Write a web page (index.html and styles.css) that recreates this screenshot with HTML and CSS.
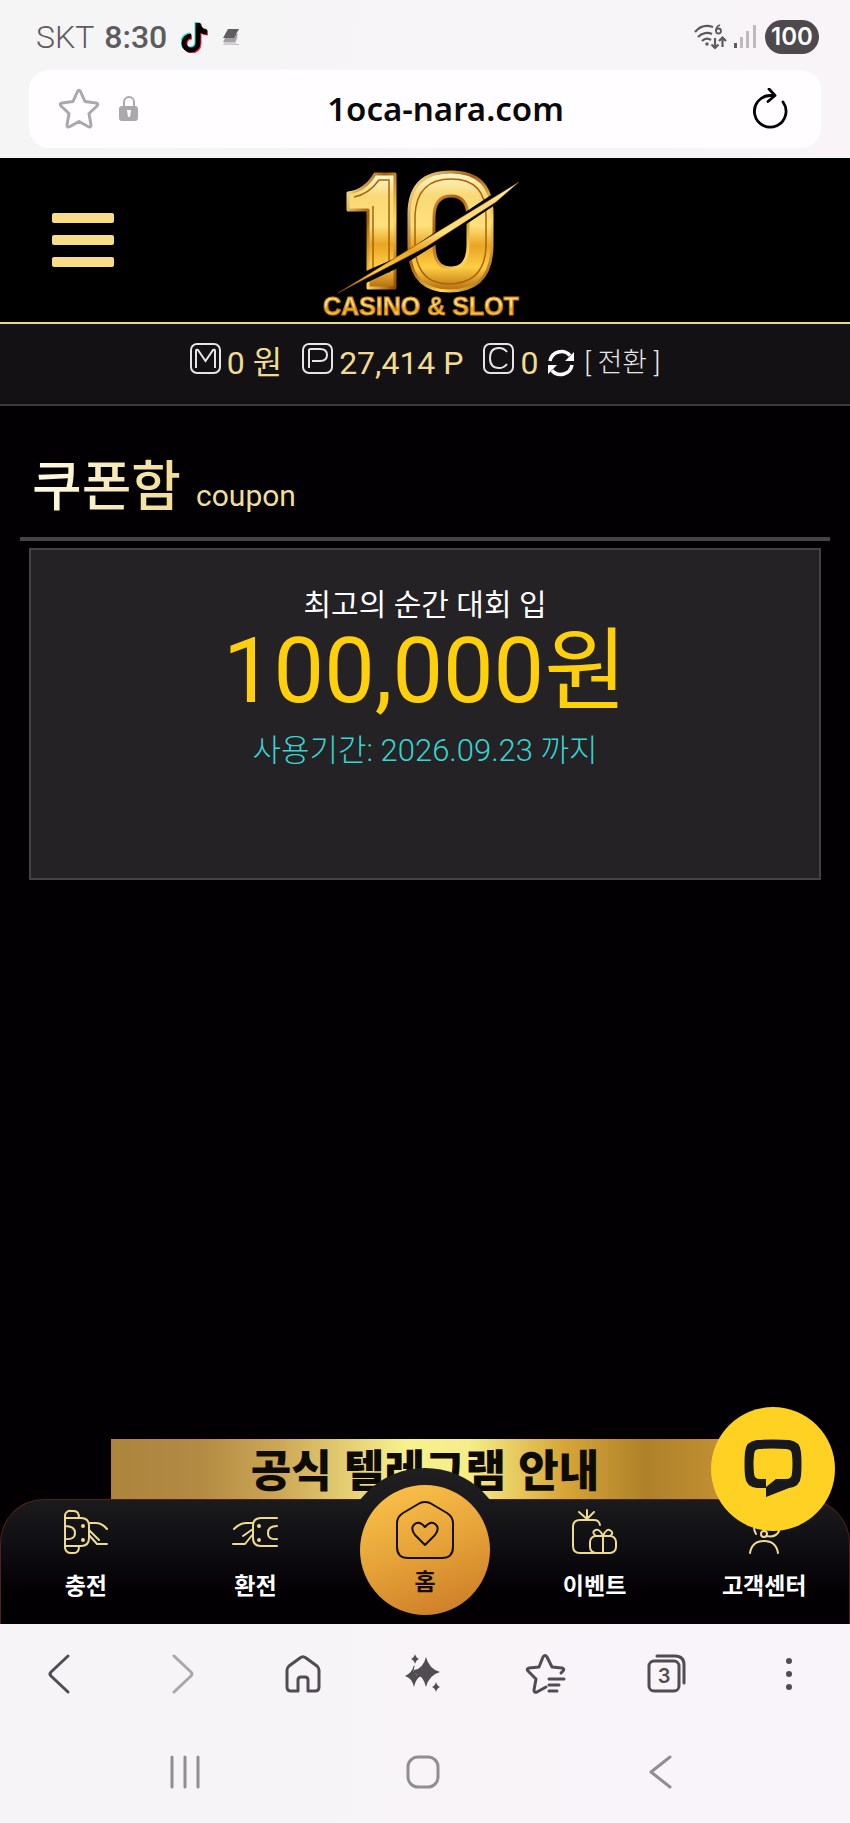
FILE: index.html
```html
<!DOCTYPE html>
<html lang="ko">
<head>
<meta charset="utf-8">
<meta name="viewport" content="width=device-width, initial-scale=1">
<title>쿠폰함</title>
<link rel="stylesheet" href="styles.css">
</head>
<body>
<div class="browser-top">
  <div class="status">
    <span class="carrier">SKT</span>
    <span class="clock">8:30</span>
    <svg class="tiktok" width="28" height="32" viewBox="0 0 28 32" aria-hidden="true">
      <g fill="none" stroke-width="5">
        <path stroke="#25e5df" d="M16 1v20a7 7 0 1 1-7-7M16 2c1 5 4 8 9 8"/>
        <path stroke="#fe2c55" d="M18 3v20a7 7 0 1 1-7-7M18 4c1 5 4 8 9 8"/>
        <path stroke="#000" d="M17 2v20a7 7 0 1 1-7-7M17 3c1 5 4 8 9 8"/>
      </g>
    </svg>
    <svg class="stack" width="18" height="18" viewBox="0 0 18 18" aria-hidden="true">
      <path fill="#cfcdcf" d="M4 9h11l-3 8H0z"/><path fill="#a3a1a3" d="M4 6h11l-3 8H0z"/><path fill="#5f5d5f" d="M5 1h11l-5 9H0z"/>
      <path stroke="#bbb" d="M12 16.500h4"/>
    </svg>
    <span class="status-right">
      <svg width="34" height="28" viewBox="0 0 34 28" aria-hidden="true">
        <g fill="none" stroke="#5d5b5d" stroke-width="2.200">
          <path d="M2 9C7 3 14 2 20 4M5 14c4-4.500 10-5 14-3M9 18c3-3 6-3 9-1"/>
          <path d="M22 15v10m-3.500-3.500L22 25l3.500-3.500M29.500 24V14.500m-3.500 3.500l3.500-3.500 3.500 3.500"/>
          <path stroke-width="1.800" d="M27 2c-3 1-4 3-4 6"/><circle cx="25.500" cy="8" r="2.500" stroke-width="1.800"/>
        </g>
        <circle cx="14" cy="21" r="1.700" fill="#5d5b5d"/>
      </svg>
      <svg width="24" height="26" viewBox="0 0 24 26" aria-hidden="true">
        <path fill="#5d5b5d" d="M1 19h3v5H1z"/><path fill="#bdbbbd" d="M7 13h3v11H7zM13 7h3v17h-3zM20 1h3v23h-3z"/>
      </svg>
      <span class="battery">100</span>
    </span>
  </div>
  <div class="address">
    <button class="icon-btn" aria-label="북마크"><svg width="42" height="42" viewBox="0 0 42 42" fill="none" stroke="#aaa8aa" stroke-width="3" stroke-linejoin="round" aria-hidden="true"><path d="M19.500 3.500q1.500-2.500 3 0l4.500 10 11 1.500q3 .7 1 3l-8 7.500 2 11.500q0 3-3 1.500L21 33.500l-9 5q-3 1.500-3-1.500l2-11.500L3 18q-2-2.300 1-3l11-1.500z"/></svg></button>
    <svg class="lock" width="22" height="28" viewBox="0 0 22 28" aria-hidden="true"><path d="M6 12V7a5 5 0 0 1 10 0v5" fill="none" stroke="#aaa8aa" stroke-width="2"/><rect x="1" y="11" width="19" height="15" rx="3" fill="#aaa8aa"/><path fill="#fff" d="M9 15h4l-1 7h-2z"/></svg>
    <span class="url">1oca-nara.com</span>
    <button class="icon-btn reload" aria-label="새로고침"><svg width="38" height="42" viewBox="0 0 38 42" fill="none" stroke="#000" stroke-width="2.800" stroke-linecap="round" stroke-linejoin="round" aria-hidden="true"><path d="M32 14A15.800 15.800 0 1 1 19 7.500h4M18 1l6 6.500-7 6"/></svg></button>
  </div>
</div>

<header class="site-header">
  <button class="menu-btn" aria-label="메뉴"><span></span><span></span><span></span></button>
  <a class="logo" href="#" aria-label="10 CASINO &amp; SLOT">
    <svg width="206" height="152" viewBox="0 0 206 152" aria-hidden="true">
      <defs>
        <linearGradient id="gold" x1="0" y1="0" x2="0" y2="1">
          <stop offset="0" stop-color="#fff9d0"/><stop offset=".2" stop-color="#f9d876"/><stop offset=".45" stop-color="#ffe27c"/><stop offset=".62" stop-color="#e9a422"/><stop offset=".8" stop-color="#ffce45"/><stop offset="1" stop-color="#b36a0c"/>
        </linearGradient>
        <linearGradient id="edge" x1="0" y1="0" x2="1" y2="1">
          <stop offset="0" stop-color="#fff0a0"/><stop offset=".4" stop-color="#a85c08"/><stop offset=".7" stop-color="#ffd65e"/><stop offset="1" stop-color="#8b4705"/>
        </linearGradient>
      </defs>
      <g fill="url(#gold)" stroke="url(#edge)" stroke-width="3" stroke-linejoin="round">
        <path d="M26 26q17-2 27-19h20v114H46V43H26z"/>
        <path fill-rule="evenodd" d="M129 5q41 0 41 42v31q0 46-43 46-40 0-40-46V47q0-42 42-42zm0 24q-17 0-17 22v27q0 23 17 23t17-23V51q0-22-17-22z"/>
      </g>
      <path fill="none" stroke="#a8630c" stroke-width="1.500" d="M32 30q15-3 25-17h10v93M51 103V39M93 78V48Q95 12 129 12q35 0 35 37v30q-1 38-38 38-32-1-33-38"/>
      <path fill="#000" d="M44 104L76 90 172 26 176 36 110 80 78 100 44 116z"/>
      <path fill="url(#gold)" stroke="#8f5209" stroke-width=".5" d="M16 126L197 15 174 35 104 80z"/>
      <text x="1" y="148" class="logo-text" fill="url(#gold)" stroke="#c47a14">CASINO &amp; SLOT</text>
    </svg>
  </a>
</header>

<div class="wallet">
  <span class="wallet-item">
    <svg width="31" height="31" viewBox="0 0 31 31" class="badge" aria-label="M"><rect x="1" y="1" width="29" height="29" rx="6"/><path d="M6 25V8q0-2 2-1l7.500 11L23 7q2-1 2 1v17"/></svg>
    <span>0 원</span>
  </span>
  <span class="wallet-item">
    <svg width="31" height="31" viewBox="0 0 31 31" class="badge" aria-label="P"><rect x="1" y="1" width="29" height="29" rx="6"/><path d="M7 25V7q0-1 2-1h9q7 0 7 6t-7 6H10"/></svg>
    <span>27,414 P</span>
  </span>
  <span class="wallet-item">
    <svg width="31" height="31" viewBox="0 0 31 31" class="badge" aria-label="C"><rect x="1" y="1" width="29" height="29" rx="6"/><path d="M24 9q-3-4-8-4-9 0-9 10t9 10q5 0 8-4"/></svg>
    <span>0</span>
  </span>
  <button class="convert"><svg width="28" height="28" viewBox="0 0 28 28" aria-hidden="true"><g fill="none" stroke="#fff" stroke-width="3.500"><path d="M3 12A11.500 11.500 0 0 1 23 6.500M25 16A11.500 11.500 0 0 1 5 21.500"/></g><path fill="#fff" d="M27 3v9H18zM1 25V16h9z"/></svg><span>[ 전환 ]</span></button>
</div>

<main class="content">
  <h1 class="title"><span class="title-ko">쿠폰함</span><span class="title-en">coupon</span></h1>
  <article class="coupon">
    <p class="coupon-name">최고의 순간 대회 입</p>
    <p class="coupon-amount">100,000원</p>
    <p class="coupon-date">사용기간: 2026.09.23 까지</p>
  </article>
</main>

<div class="dock">
  <a class="banner" href="#">공식 텔레그램 안내</a>
  <nav class="tabs">
    <a class="tab" href="#">
      <svg class="tab-icon" width="46" height="46" viewBox="0 0 46 46" aria-hidden="true"><path d="M2 6a5 5 0 0 1 6-4h3q5 0 5 7M2 6v33q1 5 6 5h3q5 0 5-7M2 9h16q8 0 8 8v12q0 8-8 8H2M2 17q10 0 10 7t-10 6M26 14h7q6 0 11 6M26 21l10 10M26 26l8 9h10"/><circle cx="20" cy="17" r="1"/><circle cx="20" cy="31" r="1"/></svg>
      <span>충전</span></a>
    <a class="tab" href="#">
      <svg class="tab-icon" width="46" height="46" viewBox="0 0 46 46" aria-hidden="true"><path d="M45 9H29q-8 0-8 8v12q0 8 8 8h16M45 17q-9 0-9 7t9 6M21 14h-7q-6 0-12 6M21 20L11 27M21 25l-8 10H1"/><circle cx="27" cy="17" r="1"/><circle cx="27" cy="31" r="1"/></svg>
      <span>환전</span></a>
    <a class="tab home" href="#">
      <span class="home-disc">
      <svg width="62" height="62" viewBox="0 0 62 62" fill="none" stroke="#160d04" stroke-width="2" stroke-linejoin="round" aria-hidden="true"><path d="M26 4q5-2 10 0l17 10q6 4 6 10v24q0 11-11 11H14Q3 59 3 48V24q0-6 6-10z"/><path d="M31 46L21 36q-4-5-2-9 5-7 12 1 7-8 12-1 2 4-2 9z"/></svg>
      <span>홈</span></span></a>
    <a class="tab" href="#">
      <svg class="tab-icon" width="46" height="46" viewBox="0 0 46 46" aria-hidden="true"><path d="M28 16q-1-5-6-5H8q-7 0-7 7v19q0 7 7 7h29M15 11V1M15 10L7 3M15 10l7-7"/><rect x="18" y="27" width="26" height="17" rx="6"/><path d="M31 27v17M31 27h-7q-4-3-2-5 5-4 9 5 4-9 8-5 3 2-1 5z"/></svg>
      <span>이벤트</span></a>
    <a class="tab" href="#">
      <svg class="tab-icon" width="46" height="46" viewBox="0 0 46 46" aria-hidden="true"><path d="M9 44Q11 32 23 32t14 12M13 18q0 4 2 7M25 27q10 2 13-5"/><circle cx="23" cy="25" r="3"/></svg>
      <span>고객센터</span></a>
  </nav>
  <button class="chat" aria-label="채팅 상담"><svg width="60" height="60" viewBox="0 0 60 60" aria-hidden="true"><path fill="#17191b" fill-rule="evenodd" d="M14 1q16-1 32 0 11 1 12 12 1 12 0 24-1 11-12 12L23 58V49h-9Q3 48 2 37 1 25 2 13 3 2 14 1zM16 10q-5 0-5 6-1 9 0 18 0 6 6 6h6v8l10-8h10q6 0 6-6 1-9 0-18 0-6-6-6-13-1-27 0z"/></svg></button>
</div>

<footer class="browser-bottom">
  <div class="tools">
    <button class="icon-btn" aria-label="뒤로"><svg width="42" height="42" viewBox="0 0 42 42"><path d="M30 3L13 19q-2 2 0 4l17 16"/></svg></button>
    <button class="icon-btn dim" aria-label="앞으로"><svg width="42" height="42" viewBox="0 0 42 42"><path d="M14 3l17 16q2 2 0 4L14 39"/></svg></button>
    <button class="icon-btn" aria-label="홈"><svg width="42" height="42" viewBox="0 0 42 42"><path d="M19 5q3-2.500 6 0l11 8q2 2 2 4v17q0 4-4 4h-7V27q0-3-3-3h-4q-3 0-3 3v11h-7q-4 0-4-4V17q0-2 2-4z"/></svg></button>
    <button class="icon-btn" aria-label="AI"><svg width="42" height="42" viewBox="0 0 42 42"><path class="solid" d="M23 4q3 12 14 15-11 3-14 15-3-12-12-14v-3Q20 16 23 4zM11 12q1 1 0 4-2 5 5 6l2 1q-5 2-7 11-2-9-9-11 7-3 9-11zM12 1q1 4 4 5-3 1-4 5-1-4-4-5 3-1 4-5zM33 29q1 4 4 5-3 1-4 5-1-4-4-5 3-1 4-5z"/></svg></button>
    <button class="icon-btn" aria-label="북마크 목록"><svg width="42" height="42" viewBox="0 0 42 42"><path d="M36 20l2-2q2-2-1-3l-10-1-5-10q-2-3-4 0l-4 10-10 1q-3 1-1 3l8 8-2 11q0 3 3 2l9-5M24 26h15M24 32h10M24 38h8"/></svg></button>
    <button class="icon-btn" aria-label="탭 3개"><svg width="42" height="42" viewBox="0 0 42 42"><rect x="3" y="8" width="30" height="30" rx="5"/><path d="M11 3h18q9 0 9 9v18"/><text x="18" y="30" class="tab-count">3</text></svg></button>
    <button class="icon-btn" aria-label="더보기"><svg width="42" height="42" viewBox="0 0 42 42"><g class="solid"><circle cx="21" cy="8" r="3"/><circle cx="21" cy="21" r="3"/><circle cx="21" cy="34" r="3"/></g></svg></button>
  </div>
  <div class="system">
    <button class="icon-btn" aria-label="최근 앱"><svg width="36" height="36" viewBox="0 0 36 36"><path d="M5 3v30M18 3v30M31 3v30"/></svg></button>
    <button class="icon-btn" aria-label="홈 화면"><svg width="36" height="36" viewBox="0 0 36 36"><rect x="3" y="3" width="30" height="30" rx="10"/></svg></button>
    <button class="icon-btn" aria-label="이전"><svg width="36" height="36" viewBox="0 0 36 36"><path d="M27 3L8 18l19 15"/></svg></button>
  </div>
</footer>
</body>
</html>
```
FILE: styles.css
```css
* { box-sizing: border-box; }
body {
  margin: 0;
  min-height: 100vh;
  display: flex;
  flex-direction: column;
  background: #020003;
  color: #fff;
  font-family: Roboto, "Noto Sans CJK KR", sans-serif;
}
button { border: 0; padding: 0; background: none; color: inherit; font: inherit; }
a { color: inherit; text-decoration: none; }
svg { display: block; flex: none; }
.icon-btn { display: grid; place-items: center; }

.browser-top {
  background: linear-gradient(100deg, #f5f5f5, #f8f4f8);
  padding: 0 29px 10px;
  color: #5d5b5d;
}
.status { height: 70px; padding: 3px 0 0 7px; display: flex; align-items: center; }
.carrier, .clock { font-size: 32px; }
.carrier { font-weight: 300; margin-right: 10px; }
.clock { font-weight: 500; margin-right: 14px; }
.stack { margin-left: 14px; }
.status-right { margin-left: auto; display: flex; align-items: center; gap: 6px; padding-right: 2px; }
.battery {
  margin-left: 2px;
  width: 54px;
  height: 34px;
  border-radius: 17px;
  background: #4d494c;
  color: #fff;
  font: 600 24px/34px Inter, sans-serif;
  text-align: center;
}
.address {
  height: 78px;
  border-radius: 20px;
  background: #fffdff;
  display: grid;
  grid-template-columns: 42px 22px 1fr 38px;
  gap: 18px;
  align-items: center;
  padding: 0 32px 0 29px;
}
.url {
  color: #0b090b;
  font: 600 33px/42px "Noto Sans", sans-serif;
  text-align: center;
}

.site-header {
  height: 166px;
  background: #000;
  border-bottom: 2px solid #ead68e;
  display: grid;
  grid-template-columns: 1fr auto 1fr;
  align-items: center;
  padding: 0 52px;
}
.logo { padding-top: 6px; }
.menu-btn { width: 62px; display: grid; gap: 12px; }
.menu-btn span { height: 10px; border-radius: 2px; background: #f8dc87; }
.logo-text { font: 700 25px "Liberation Sans", sans-serif; stroke-width: 1px; }

.wallet {
  height: 82px;
  background: #131114;
  border-bottom: 2px solid #3b393c;
  display: flex;
  justify-content: center;
  align-items: flex-start;
  padding-top: 15px;
  line-height: 48px;
  font-size: 32px;
  color: #f0dc8f;
}
.wallet-item { display: flex; gap: 6px; margin-right: 20px; }
.wallet-item:nth-of-type(3) { margin-right: 9px; }
.badge { margin-top: 4px; fill: none; stroke: #e6e4e6; stroke-width: 2; }
.convert { display: flex; align-items: center; gap: 9px; font-size: 27px; line-height: 48px; color: #e8e6e8; font-weight: 300; }

.content { flex: 1; padding: 45px 20px; }
.title {
  margin: 0;
  height: 90px;
  padding-left: 12px;
  border-bottom: 4px solid #464447;
  display: flex;
  align-items: baseline;
  gap: 15px;
  line-height: 74px;
  font-weight: 400;
}
.title-ko {
  font-size: 54px;
  font-weight: 500;
  background: linear-gradient(90deg, #fffbe6, #f1dc92);
  background-clip: text;
  color: transparent;
}
.title-en { font-size: 30px; color: #f1de9a; }
.coupon {
  margin: 7px 9px 0;
  min-height: 332px;
  border: 2px solid #444245;
  background: #242225;
  text-align: center;
  padding-top: 30px;
}
.coupon p { margin: 0; }
.coupon-name { font-size: 30px; line-height: 50px; }
.coupon-amount { font-size: 90px; line-height: 84px; color: #fdd00b; }
.coupon-date { font-size: 31px; line-height: 74px; color: #37d5d1; font-weight: 300; }

.dock { position: relative; }
.banner {
  display: block;
  width: 74%;
  height: 60px;
  margin: 0 auto;
  background: linear-gradient(90deg, #ad843c 0, #b28a43 14%, #cda856 27%, #f8f18d 47%, #f6ed87 57%, #d7a637 72%, #ae8129 85%, #c69235);
  color: #0e0b05;
  font: 900 44px/58px "Noto Sans CJK KR", sans-serif;
  text-align: center;
}
.tabs {
  position: relative;
  height: 125px;
  border: 1px solid #54201f;
  border-bottom: 0;
  border-radius: 44px 44px 0 0;
  background: linear-gradient(#1b1b1d 0, #0f0e12 44px, #020003 94px);
  display: grid;
  grid-template-columns: repeat(5, 1fr);
}
.tab {
  display: flex;
  flex-direction: column;
  align-items: center;
  padding-top: 9px;
  gap: 12px;
  font: 700 23px/34px "Noto Sans CJK KR", sans-serif;
}
.tab-icon { fill: none; stroke: #eedb91; stroke-width: 2; stroke-linecap: round; stroke-linejoin: round; }
.home { position: relative; color: #160d04; }
.home::before {
  content: "";
  position: absolute;
  top: -32px;
  left: 50%;
  width: 164px;
  height: 156px;
  margin-left: -82px;
  border-radius: 82px 82px 0 0;
  background: linear-gradient(#202022 0, #1b1b1d 32px, #0f0e12 76px, #020003 126px);
}
.home-disc {
  position: absolute;
  top: -15px;
  left: 50%;
  width: 130px;
  height: 130px;
  margin-left: -65px;
  padding-top: 14px;
  border-radius: 50%;
  background: linear-gradient(160deg, #fdc54b, #e5a238 50%, #c97724);
  display: flex;
  flex-direction: column;
  align-items: center;
  gap: 2px;
}
.chat {
  position: absolute;
  right: 15px;
  top: -32px;
  width: 124px;
  height: 124px;
  border-radius: 50%;
  background: #ffd122;
  display: grid;
  place-items: center;
}

.browser-bottom { height: 199px; background: linear-gradient(90deg, #f6f4f7, #f9f4f9); }
.browser-bottom svg { fill: none; stroke: #514c51; stroke-width: 3; stroke-linecap: round; stroke-linejoin: round; }
.browser-bottom .dim svg { stroke: #aaa6aa; }
.browser-bottom .solid { fill: #514c51; stroke: none; }
.browser-bottom .tab-count { font: 600 20px Inter, sans-serif; fill: #514c51; stroke: none; text-anchor: middle; }
.tools { display: flex; justify-content: space-between; padding: 29px 40px 0 38px; }
.system { display: flex; justify-content: space-between; padding: 59px 171px 0 167px; }
.browser-bottom .system svg { stroke: #918e92; }
```
